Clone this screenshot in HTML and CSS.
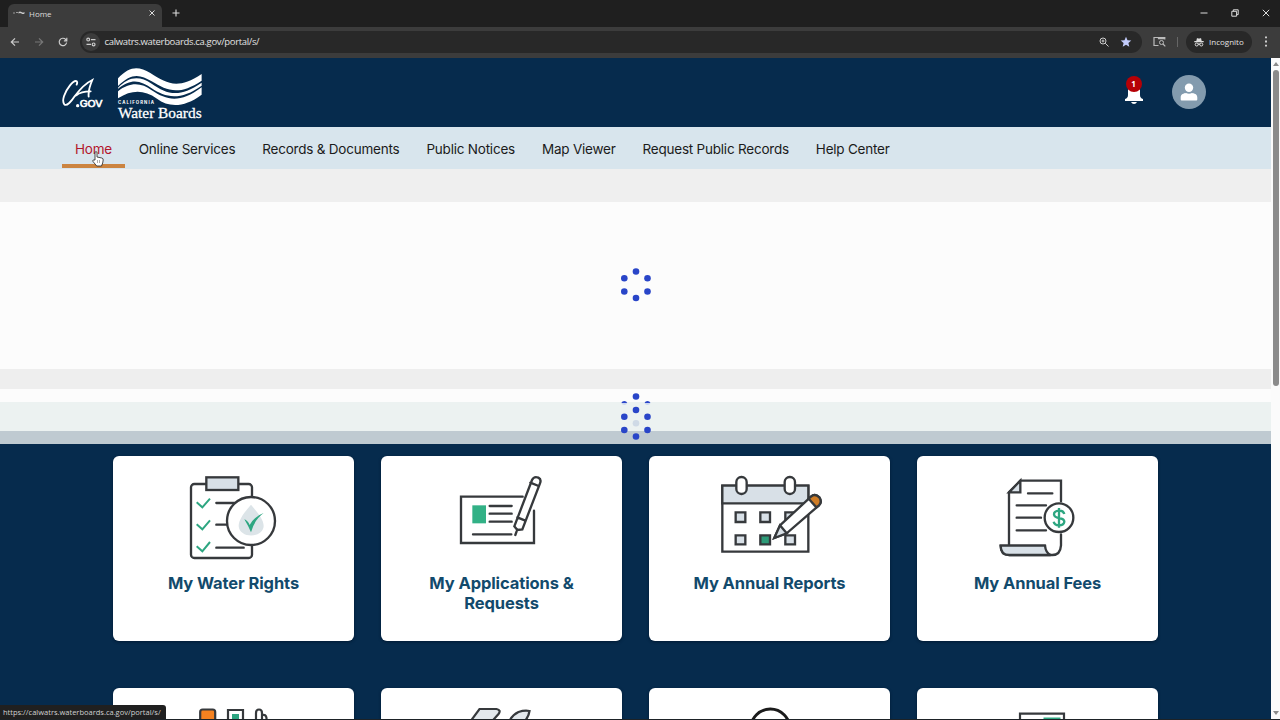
FILE: index.html
```html
<!doctype html>
<html lang="en">
<head>
<meta charset="utf-8">
<title>Home</title>
    <link rel="stylesheet" href="styles.css">
</head>

<body>
    <!-- browser tabs -->
    <div class="tabs">
        <div class="tab">
            <svg class="favicon" viewBox="0 0 12 8"><path d="M0 4h2M3 3.500h2" stroke="#999" fill="none"/><path d="M5.500 3q1.500-1 3 0t3 0v1.500q-1.500 1-3 0t-3 0zM6 6h5" fill="#ccc"/></svg>
            <span>Home</span>
            <svg class="close" viewBox="0 0 8 8"><path d="M1.500 1.500l5 5M6.500 1.500l-5 5" stroke="#ddd" fill="none"/></svg>
        </div>
        <svg class="plus" viewBox="0 0 8 8"><path d="M4 .5v7M.5 4h7" stroke="#ddd" stroke-width="1.100" fill="none"/></svg>
        <div class="winBtns">
            <svg viewBox="0 0 8 8"><path d="M.5 4h7" stroke="#ddd"/></svg>
            <svg viewBox="0 0 8 8"><path d="M.8 2.300h4.800v4.900H.8zM2.300 2.300V.8h4.900v4.800H5.600" stroke="#ddd" fill="none"/></svg>
            <svg viewBox="0 0 8 8"><path d="M.8.8l6.400 6.400M7.200.8L.8 7.200" stroke="#ddd"/></svg>
        </div>
    </div>

    <!-- address bar -->
    <div class="toolbar">
        <div class="navBtns">
            <svg viewBox="0 0 10 10"><path d="M9 5H1.500M5 1.300L1.300 5 5 8.700" stroke="#ccc" stroke-width="1.200" fill="none"/></svg>
            <svg viewBox="0 0 10 10"><path d="M1 5h7.500M5 1.300L8.700 5 5 8.700" stroke="#777" stroke-width="1.200" fill="none"/></svg>
            <svg viewBox="0 0 10 10"><path d="M8.600 5.500A3.700 3.700 0 1 1 7.700 2.500L8.800 3.600M8.800.8v3H5.900" stroke="#ccc" stroke-width="1.200" fill="none"/></svg>
        </div>
        <div class="address">
            <span class="siteInfo"><svg viewBox="0 0 10 10"><g stroke="#ccc" stroke-width="1.200" fill="none"><circle cx="2.200" cy="2.600" r="1.400"/><path d="M5 2.600h4.500M.5 7.400H5"/><circle cx="7.600" cy="7.400" r="1.400"/></g></svg></span>
            <span class="url">calwatrs.waterboards.ca.gov/portal/s/</span>
            <svg class="lens" viewBox="0 0 10 10"><g stroke="#ccc" fill="none"><circle cx="4" cy="4" r="3"/><path d="M6.200 6.200L9.500 9.500M2.600 4h2.800M4 2.600v2.800"/></g></svg>
            <svg class="star" viewBox="0 0 12 12"><path d="M6 .8l1.500 3.500 3.800.3-2.900 2.500.9 3.700L6 8.800l-3.300 2 .9-3.700L.7 4.600l3.800-.3z" fill="#c3ccfb"/></svg>
        </div>
        <svg class="panel" viewBox="0 0 13 11"><path d="M5.500 9.500H1v-8h10.800v2M5.500 1.500h6.300v1.200H5.500z" stroke="#bbb" fill="none" stroke-width="1.200"/><circle cx="8.500" cy="6.500" r="2" stroke="#bbb" fill="none"/><path d="M10 8l2.300 2.300" stroke="#bbb" stroke-width="1.200"/></svg>
        <span class="sep"></span>
        <div class="incognito">
            <svg viewBox="0 0 10 10"><path d="M2.300 4L3 1l1 .4h2L7 1l.7 3z" fill="#ddd"/><path d="M.3 4.700h9.400M4 7.200h2" stroke="#ddd" stroke-width="1.200" fill="none"/><circle cx="2.700" cy="7.500" r="1.500" stroke="#ddd" fill="none"/><circle cx="7.300" cy="7.500" r="1.500" stroke="#ddd" fill="none"/></svg>
            Incognito
        </div>
        <svg class="dots" viewBox="0 0 2 11"><path d="M0 .5h2v1.800H0zM0 4.600h2v1.800H0zM0 8.700h2v1.800H0z" fill="#ccc"/></svg>
    </div>

    <div class="view">
        <div class="page">
            <div class="header">
                <svg class="caGov" viewBox="0 0 126 96">
                    <g fill="none" stroke="#fff" stroke-width="5.500" stroke-linecap="round">
                        <path d="M44 20C50 6 38 4 24 22C8 42-2 68 7 79C14 86 29 69 38 55C52 36 68 17 91 6C84 22 78 38 80 56"/>
                        <path d="M43 52C55 41 70 40 86 40"/>
                    </g>
                    <circle cx="47" cy="83" r="5" fill="#fff"/>
                    <text x="53" y="87" textLength="69" lengthAdjust="spacingAndGlyphs">GOV</text>
                </svg>
                <svg class="boards" viewBox="0 0 255 160">
                    <g fill="#fff">
                        <path d="M3 31C40-8 66-4 100 15C150 46 180 67 254 18V38C185 84 150 68 104 40C70 20 45 12 3 54z"/>
                        <path d="M3 59C34 26 66 21 104 47C150 78 185 92 254 44V53C190 99 145 89 104 61C72 38 44 29 3 62z"/>
                        <path d="M3 70C40 40 75 45 104 67C150 98 190 106 254 58V80C200 120 155 118 120 92C80 65 45 65 3 91z"/>
                    </g>
                    <text class="small" x="3" y="109" textLength="108">CALIFORNIA</text>
                    <text class="name" x="3" y="151" textLength="251" lengthAdjust="spacingAndGlyphs">Water Boards</text>
                </svg>
                <div class="bell">
                    <svg viewBox="0 0 20 20"><path d="M4 3h12v7q0 3 3 4v2H1v-2q3-1 3-4zM7 17h6q-1 2-3 2t-3-2z" fill="#fff"/></svg>
                    <span class="badge">1</span>
                </div>
                <div class="avatar"><svg viewBox="0 0 18 18"><circle cx="9" cy="4.700" r="4.200" fill="#fff"/><path d="M.7 16.500v-2C.7 11 4 10.300 6 10q3 1.500 6 0c2 .3 5.300 1 5.300 4.500v2q0 1-1 1H1.700q-1 0-1-1z" fill="#fff"/></svg></div>
            </div>

            <div class="menu">
                <a class="active">Home</a>
                <a>Online Services</a>
                <a>Records &amp; Documents</a>
                <a>Public Notices</a>
                <a>Map Viewer</a>
                <a>Request Public Records</a>
                <a>Help Center</a>
                <svg class="cursor" viewBox="0 0 12 16"><path d="M3 9V1.800q0-1.200 1-1.200t1 1.200V6l4.800 1q1.500.3 1.400 2l-.5 3-1.200 3H4.700L1 10.500q-.7-1.500.7-1.500z" fill="#fff" stroke="#222" stroke-width=".8"/><path d="M5.500 9v3M7.500 9v3" stroke="#777" stroke-width=".6"/></svg>
            </div>

            <!-- sections still loading -->
            <div class="gap1"></div>
            <div class="loading">
                <svg class="spinner" viewBox="0 0 32 36"><g fill="#2945c8"><circle cx="16" cy="4.500" r="3.300"/><circle cx="27.500" cy="11.300" r="3.300"/><circle cx="27.500" cy="24.500" r="3.300"/><circle cx="16" cy="31" r="3.300"/><circle cx="4.300" cy="24.500" r="3.300"/><circle cx="4.300" cy="11.300" r="3.300"/></g></svg>
            </div>
            <div class="gap2"></div>
            <div class="loading2">
                <div class="strip1"></div>
                <div class="strip2"></div>
                <div class="strip3"></div>
                <svg class="spinner2" viewBox="0 0 32 50">
                    <g fill="#2945c8"><circle cx="16" cy="6.500" r="3.300"/><circle cx="16" cy="20" r="3.300"/><circle cx="27.500" cy="26.700" r="3.300"/><circle cx="27.500" cy="40" r="3.300"/><circle cx="16" cy="46.500" r="3.300"/><circle cx="4.300" cy="40" r="3.300"/><circle cx="4.300" cy="26.700" r="3.300"/></g>
                    <path d="M1.300 13a3.300 3.300 0 0 1 6 0zM24.500 13a3.300 3.300 0 0 1 6 0z" fill="#2945c8"/>
                    <path d="M1.300 13h6a3.300 3.300 0 0 1-6 0zM24.500 13h6a3.300 3.300 0 0 1-6 0z" fill="#cbd6ee"/>
                    <circle cx="16" cy="33.300" r="3.300" fill="#cfdae6"/>
                </svg>
            </div>

            <div class="cards">
                <div class="card">
                    <svg viewBox="0 -1 390 330">
                        <rect x="66" y="71" width="183" height="222" rx="10" class="line"/>
                        <rect x="112" y="51" width="96" height="38" class="line grey"/>
                        <path d="M142 128h65M142 193h35M142 262h82" class="line"/>
                        <path d="M83 126l17 15 23-26M83 192l17 15 23-27M83 258l17 15 23-28" class="tick"/>
                        <circle cx="246" cy="182" r="72" class="line white"/>
                        <path d="M246 133C226 156 209 178 209 197C211 235 282 235 284 197C284 178 266 157 246 133z" fill="#dce4e8"/>
                        <path d="M226 177q10 3 16 17q15-27 42-36q-28 20-38 58q-9-21-20-39z" fill="#2da681"/>
                    </svg>
                    <h3>My Water Rights</h3>
                </div>
                <div class="card">
                    <svg viewBox="-6 -1 390 330">
                        <path d="M251 109H66v139h219v-97" class="line"/>
                        <rect x="100" y="135" width="41" height="54" fill="#32b186"/>
                        <path d="M152 137h66M152 160h66M152 184h66M102 222h115" class="line"/>
                        <path d="M226 198L279 59Q285 47 298 52Q308 57 303 69L250 207L235 209zM235 171l24 10M274 67l25 10M235 207l-6 17" class="line white"/>
                    </svg>
                    <h3>My Applications &amp; Requests</h3>
                </div>
                <div class="card">
                    <svg viewBox="3 -4 390 330">
                        <path d="M55 73h258v198H55z" class="line white"/>
                        <path d="M55 73h258v53H55z" class="line grey"/>
                        <rect x="97" y="47" width="31" height="51" rx="15" class="line white"/>
                        <rect x="242" y="47" width="31" height="51" rx="15" class="line white"/>
                        <path d="M95 153h29v29H95zM169 153h29v29h-29zM244 153h29v29h-29zM95 222h29v27H95zM244 222h29v27h-29z" class="line grey"/>
                        <path d="M169 222h29v27h-29z" class="line green"/>
                        <path d="M228 192L321 106Q333 95 346 108Q355 121 345 132L248 216L211 230z" class="line white"/>
                        <path d="M321 106Q333 95 346 108Q355 121 345 132L337 138L314 112z" class="line orange"/>
                        <path d="M228 192l20 24-37 14z" class="line grey"/>
                    </svg>
                    <h3>My Annual Reports</h3>
                </div>
                <div class="card">
                    <svg viewBox="-18 -1 390 330">
                        <path d="M90 255V96L124 61H246V123M246 222V255Q244 284 220 284H91Q65 284 65 256H198" class="line"/>
                        <path d="M65 256H198Q200 278 215 284H91Q65 284 65 256z" class="line grey"/>
                        <path d="M90 96h34V61z" class="line grey"/>
                        <path d="M147 99h73M113 135h88M113 172h73M113 210h88" class="line"/>
                        <circle cx="240" cy="172" r="43" class="line white"/>
                        <path d="M256 161Q253 150 240 151Q225 152 225 162Q226 171 240 173Q256 176 256 184Q254 195 240 195Q226 194 224 184M240 143v59" class="tick dollar"/>
                    </svg>
                    <h3>My Annual Fees</h3>
                </div>

                <div class="card low">
                    <svg viewBox="168.500 690 130 110">
                        <rect x="199.700" y="709.500" width="15" height="30" rx="2.500" class="thin orange2"/>
                        <path d="M227.500 710h15v30h-15z" class="thin"/>
                        <path d="M231.500 714h7v20h-7z" fill="#2da681"/>
                        <path d="M255.500 730v-17q0-3.500 3-3.500t3 3.500v17M261.500 715q4-1 4.500 3v12" class="thin"/>
                    </svg>
                </div>
                <div class="card low">
                    <svg viewBox="436.500 690 130 110">
                        <path d="M468 724l11-15h17q5 1 2 5l-8 9M508 724q2-8 10-12q6-2 11-1q-1 8-9 14" class="thin shade"/>
                    </svg>
                </div>
                <div class="card low">
                    <svg viewBox="704.500 690 130 110"><circle cx="769.800" cy="728.500" r="19.500" class="thin big"/></svg>
                </div>
                <div class="card low">
                    <svg viewBox="972.500 690 130 110">
                        <path d="M1019.500 730v-16.300h44V730" class="thin"/>
                        <path d="M1043 717.500h17v10h-17z" fill="#2da681"/>
                    </svg>
                </div>
            </div>
        </div>
        <div class="scroll">
            <span class="up"></span>
            <span class="thumb"></span>
            <span class="down"></span>
        </div>
        <div class="status">https://calwatrs.waterboards.ca.gov/portal/s/</div>
    </div>
</body>
</html>
```
FILE: styles.css
```css
*{
    box-sizing: border-box;
}
body{
    margin: 0;
    width: 1280px;
    height: 720px;
    overflow: hidden;
    display: flex;
    flex-direction: column;
    background: #1d2226;
    font-family: Inter, "Liberation Sans", sans-serif;
}
svg{
    display: block;
    flex: none;
}

/* browser */
.tabs{
    height: 27px;
    background: #1f1f1f;
    display: flex;
    align-items: center;
    padding-left: 8px;
    padding-bottom: 1px;
    color: #ddd;
    font: 8px "Open Sans", sans-serif;
}
.tab{
    width: 154px;
    height: 23px;
    margin-top: 5px;
    padding: 0 6px 5px 5px;
    display: flex;
    align-items: center;
    background: #3c3c3c;
    border-radius: 6px 6px 0 0;
}
.favicon{
    width: 12px;
    height: 8px;
    margin-right: 4px;
}
.close{
    width: 8px;
    height: 8px;
    margin-left: auto;
}
.plus{
    width: 8px;
    height: 8px;
    margin-left: 10px;
}
.winBtns{
    margin-left: auto;
    margin-right: 10px;
    display: flex;
    gap: 23px;
}
.winBtns svg{
    width: 8px;
    height: 8px;
}
.toolbar{
    height: 31px;
    background: #3c3c3c;
    display: flex;
    align-items: center;
    padding-bottom: 2px;
    color: #e3e3e3;
    font-family: "Open Sans", sans-serif;
}
.navBtns{
    display: flex;
    gap: 14px;
    margin-left: 10px;
}
.navBtns svg{
    width: 10px;
    height: 10px;
}
.address{
    width: 1062px;
    height: 22px;
    margin-left: 12px;
    border-radius: 11px;
    background: #282828;
    display: flex;
    align-items: center;
    padding: 0 10px 0 2px;
}
.siteInfo{
    width: 18px;
    height: 18px;
    border-radius: 50%;
    background: #3c3c3c;
    padding: 4px;
}
.url{
    margin-left: 4.500px;
    font-size: 9.500px;
    letter-spacing: -.34px;
}
.lens{
    width: 10px;
    height: 10px;
    margin-left: auto;
}
.star{
    width: 12px;
    height: 12px;
    margin-left: 11px;
}
.panel{
    width: 13px;
    height: 11px;
    margin-left: 11px;
}
.sep{
    width: 1px;
    height: 10px;
    margin: 0 8px 0 11px;
    background: #666;
}
.incognito{
    width: 66px;
    height: 22px;
    border-radius: 11px;
    background: #282828;
    display: flex;
    align-items: center;
    gap: 5px;
    padding-left: 8px;
    font-size: 8px;
}
.incognito svg{
    width: 10px;
    height: 10px;
}
.dots{
    width: 2px;
    height: 11px;
    margin-left: 13px;
}

/* page */
.view{
    position: relative;
    height: 661px;
    display: flex;
}
.page{
    width: 1271px;
    overflow: hidden;
    background: #062b4d;
}
.header{
    height: 69px;
    display: flex;
    align-items: flex-start;
    padding: 0 65px 0 62px;
}
.caGov{
    width: 42px;
    height: 32px;
    margin-top: 20px;
}
.caGov text{
    font: 27px Inter, sans-serif;
    fill: #fff;
    stroke: #fff;
    stroke-width: 1.800px;
}
.boards{
    width: 85px;
    height: 53.300px;
    margin: 10px auto 0 13px;
}
.boards text{
    fill: #fff;
}
.small{
    font: bold 13px Inter, sans-serif;
}
.name{
    font: 43px "Liberation Serif", serif;
    stroke: #fff;
    stroke-width: .8px;
}
.bell{
    position: relative;
    width: 20px;
    height: 20px;
    margin: 27px 28.500px 0 0;
}
.badge{
    position: absolute;
    left: 2px;
    top: -9px;
    width: 16px;
    height: 16px;
    border-radius: 50%;
    background: #b60006;
    color: #fff;
    font: bold 8px/16px "Open Sans", sans-serif;
    text-align: center;
}
.avatar{
    width: 34px;
    height: 34px;
    margin-top: 17px;
    border-radius: 50%;
    background: #839bae;
    padding: 8px;
}
.menu{
    position: relative;
    height: 42px;
    background: #d8e5ed;
    display: flex;
    padding-left: 62px;
}
.menu a{
    height: 41px;
    padding: 0 13.600px 0 13.400px;
    line-height: 44px;
    font-size: 13.500px;
    letter-spacing: -.22px;
    color: #1b1b1b;
    white-space: nowrap;
}
.menu .active{
    padding: 0 13.400px 0 13px;
    color: #b3152c;
    border-bottom: 4px solid #cb8441;
}
.cursor{
    position: absolute;
    left: 92px;
    top: 24px;
    width: 12px;
    height: 16px;
}
.gap1{
    height: 33px;
    background: #efefef;
}
.loading{
    height: 167px;
    background: #fcfcfc;
    padding: 65px 0 0 619.700px;
}
.spinner{
    width: 32px;
    height: 36px;
}
.gap2{
    height: 20px;
    background: #eee;
}
.loading2{
    position: relative;
}
.strip1{
    height: 13px;
    background: #fcfcfc;
}
.strip2{
    height: 29px;
    background: #ecf2f1;
}
.strip3{
    height: 13px;
    background: #bfcad1;
}
.spinner2{
    position: absolute;
    left: 619.700px;
    top: 1px;
    width: 32px;
    height: 50px;
}

.cards{
    display: grid;
    grid-template-columns: repeat(4, 241px);
    grid-template-rows: 185px 185px;
    gap: 47px 27px;
    padding: 12px 0 0 113px;
}
.card{
    background: #fff;
    border-radius: 6px;
    padding-top: 4px;
    box-shadow: 0 1px 3px #001a33;
}
.low{
    padding-top: 2px;
}
.card svg{
    width: 130px;
    height: 110px;
    margin: 0 auto;
}
.card h3{
    width: 180px;
    margin: 3px auto 0;
    text-align: center;
    font-size: 16.500px;
    letter-spacing: -.1px;
    line-height: 20px;
    font-weight: 700;
    color: #124a6c;
}
.line{
    fill: none;
    stroke: #36393c;
    stroke-width: 7px;
    stroke-linecap: round;
}
.white{
    fill: #fff;
}
.grey{
    fill: #d8e0e7;
}
.green{
    fill: #2d9b78;
}
.orange{
    fill: #cf7c25;
}
.tick{
    fill: none;
    stroke: #2da681;
    stroke-width: 6px;
}
.dollar{
    stroke-width: 7px;
}
.thin{
    fill: #fff;
    stroke: #36393c;
    stroke-width: 2.200px;
}
.orange2{
    fill: #f58220;
}
.shade{
    fill: #e3e8ec;
}
.big{
    stroke: #1b1b1b;
    stroke-width: 3px;
}

/* scrollbar */
.scroll{
    width: 9px;
    background: #fbfbfb;
    display: flex;
    flex-direction: column;
    align-items: center;
    padding: 4px 0;
}
.up{
    border: 3px solid transparent;
    border-top: 0;
    border-bottom: 4px solid #8a8a8a;
}
.thumb{
    width: 6px;
    height: 316px;
    margin-top: 4px;
    border-radius: 3px;
    background: #8b8b8b;
}
.down{
    margin-top: auto;
    border: 3px solid transparent;
    border-bottom: 0;
    border-top: 4px solid #8a8a8a;
}

.status{
    position: absolute;
    left: 0;
    bottom: 0;
    width: 166px;
    height: 14px;
    padding-left: 3px;
    background: #202020;
    border-radius: 0 3px 0 0;
    color: #d0d0d0;
    font: 7.500px/14px "Open Sans", sans-serif;
    white-space: nowrap;
}
```
